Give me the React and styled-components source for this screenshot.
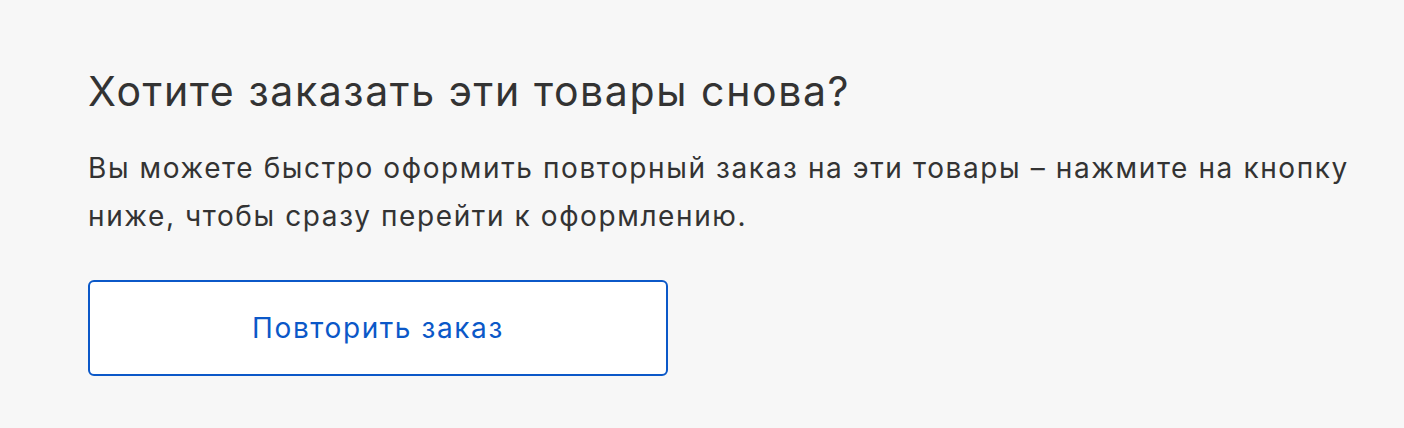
import styled, { createGlobalStyle } from "styled-components";

const GlobalStyle = createGlobalStyle`
  body {
    margin: 0;
    background: #f7f7f7;
    font-family: Inter, "Liberation Sans", sans-serif;
  }
`;

const Section = styled.section`
  padding: 67px 88px 52px;
  display: flex;
  flex-direction: column;
  align-items: flex-start;
`;

const Title = styled.h2`
  margin: 0;
  font-size: 41px;
  font-weight: 400;
  line-height: 48px;
  letter-spacing: 1.6px;
  color: #333;
  white-space: nowrap;
`;

const Text = styled.p`
  margin: 29px 0 0;
  font-size: 28px;
  line-height: 48px;
  letter-spacing: 1.6px;
  color: #333;
  white-space: nowrap;
`;

const RepeatButton = styled.button`
  margin-top: 40px;
  width: 580px;
  height: 96px;
  background: #fff;
  border: 2px solid #0b58c8;
  border-radius: 6px;
  color: #0b58c8;
  font-family: inherit;
  font-size: 28px;
  letter-spacing: 1.6px;
  cursor: pointer;
`;

export default function App() {
  return (
    <>
      <GlobalStyle />
      <Section>
        <Title>Хотите заказать эти товары снова?</Title>
        <Text>
          Вы можете быстро оформить повторный заказ на эти товары – нажмите на кнопку
          <br />
          ниже, чтобы сразу перейти к оформлению.
        </Text>
        <RepeatButton>Повторить заказ</RepeatButton>
      </Section>
    </>
  );
}
